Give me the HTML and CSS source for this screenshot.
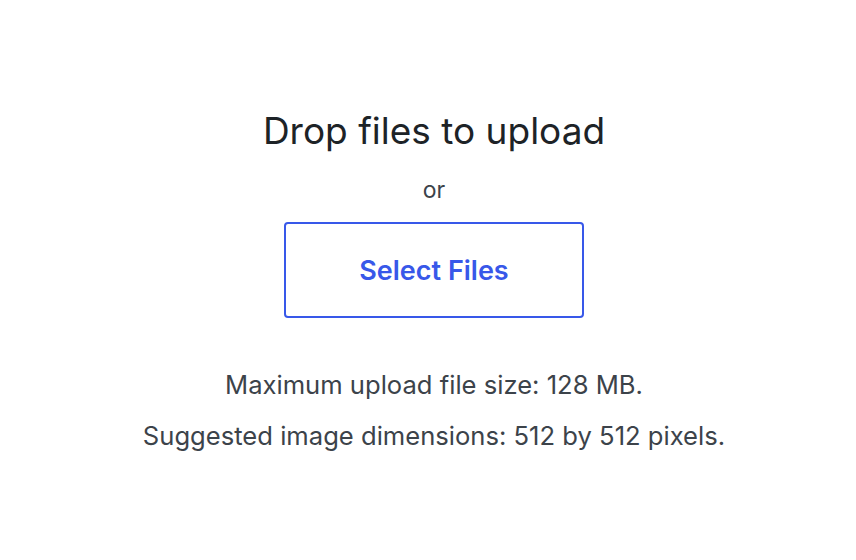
FILE: index.html
```html
<!DOCTYPE html>
<html lang="en">
<head>
    <meta charset="UTF-8">
    <meta name="viewport" content="width=device-width, initial-scale=1.0">
    <title>Upload files</title>
    <link rel="stylesheet" href="styles.css">
</head>
<body>

<div class="uploader">
    <h2 class="upload-instructions">Drop files to upload</h2>
    <p class="upload-or">or</p>
    <button class="browser-button" type="button">Select Files</button>

    <div class="upload-info">
        <p class="max-upload-size">Maximum upload file size: 128 MB.</p>
        <p class="suggested-dimensions">Suggested image dimensions: 512 by 512 pixels.</p>
    </div>
</div>

</body>
</html>
```

FILE: styles.css
```css
body {
    margin: 0;
    background: #ffffff;
    font-family: Inter, "Noto Sans", sans-serif;
    color: #3c434a;
}

.uploader {
    display: flex;
    flex-direction: column;
    align-items: center;
    padding: 108px 0 0 12px;
    text-align: center;
}

.upload-instructions {
    margin: 0;
    font-size: 37px;
    font-weight: 400;
    line-height: 46px;
    color: #1d2327;
}

.upload-or {
    margin: 22px 0 0;
    font-size: 23px;
    line-height: 28px;
    color: #3c434a;
}

.browser-button {
    margin-top: 18px;
    width: 300px;
    height: 96px;
    background: #ffffff;
    border: 2px solid #3858e9;
    border-radius: 4px;
    color: #3858e9;
    font-family: inherit;
    font-size: 27px;
    font-weight: 600;
    cursor: pointer;
}

.upload-info {
    margin-top: 51px;
}

.upload-info p {
    margin: 0;
    font-size: 25.6px;
    line-height: 32px;
}

.upload-info p + p {
    margin-top: 19px;
}
```
